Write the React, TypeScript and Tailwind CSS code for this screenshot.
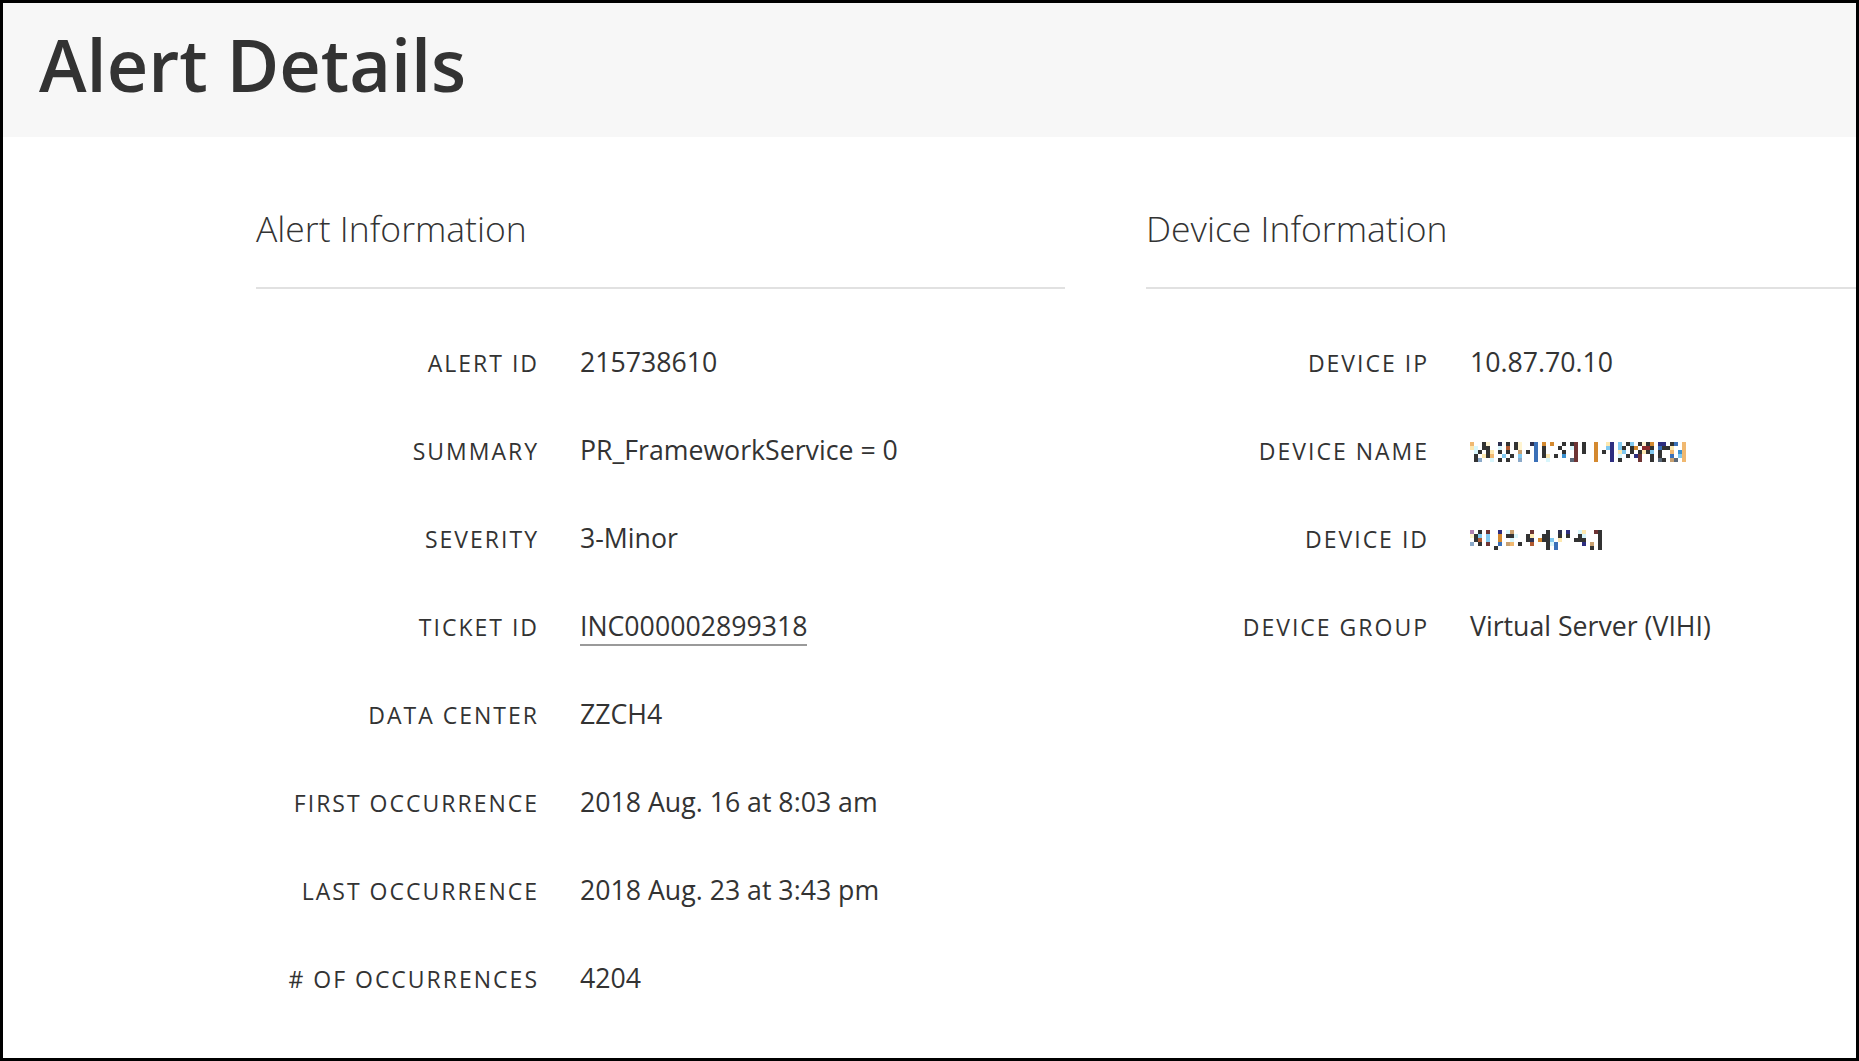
import React from "react";

type Row = { label: string; value: React.ReactNode };

// pixelated (redacted) values, 4px cells
const palette: Record<string, string> = {
  d: "#333333",
  n: "#2e2e80",
  N: "#2d3050",
  b: "#3a70b8",
  B: "#3a90d0",
  c: "#d8f6fc",
  l: "#80c8f0",
  o: "#d4892f",
  O: "#f0b870",
  y: "#fff4d0",
  Y: "#fde8b0",
  r: "#6e3434",
  R: "#8a2a2a",
  s: "#b05a30",
  g: "#8aa8c8",
  G: "#5a6878",
  t: "#c8a070",
  p: "#b080b0",
};

const deviceName = [
  "O..dy..N.d" + ".dy..Nb.o." + "o..d.dr.d." + ".o..Yn.l.d" + "l.dydo.nn." + "db.O",
  "Yc.dd..c.s" + ".dy...b.d." + "..d..cr.d." + ".o..ln.ld." + "do.RRd.bdd" + "Y..O",
  ".cd.dY.d.d" + "..t.d.b.d." + "...d..r.d." + ".o.d.n.Yl." + "d.dYdl.d.." + "O.BO",
  ".d.YdO..l." + "d.l...b.dY" + ".d.B..r..." + ".o...n.c.d" + ".nr..d.d.." + "b.lO",
  ".dg..c.d.d" + "..g...b..c" + ".....Gr..." + ".o...n.d.." + "..r..d.Gd." + "tG.O",
];

const deviceId = [
  "p.d.r..n.ct....r...d..N.n..cY..rd",
  "ydl.l..o.ddc..dY..dd..d.d..dc...d",
  ".ds.l..o..c...dN.oddl.Y...ddd...d",
  "g.d.r..b.tO.d..s...dcb......n.t.d",
  "......d............" + "d.b" + "........d." + "d",
];

function Mosaic({ rows }: { rows: string[] }) {
  const cols = rows[0].length;
  return (
    <svg
      width={cols * 4}
      height={rows.length * 4}
      viewBox={`0 0 ${cols * 4} ${rows.length * 4}`}
      className="inline-block align-[-2px]"
      shapeRendering="crispEdges"
    >
      {rows.map((row, y) =>
        row.split("").map((ch, x) =>
          palette[ch] ? (
            <rect key={`${x}-${y}`} x={x * 4} y={y * 4} width={4} height={4} fill={palette[ch]} />
          ) : null
        )
      )}
    </svg>
  );
}

const alertRows: Row[] = [
  { label: "Alert ID", value: "215738610" },
  { label: "Summary", value: "PR_FrameworkService = 0" },
  { label: "Severity", value: "3-Minor" },
  {
    label: "Ticket ID",
    value: <span className="border-b-2 border-[#9a9a9a]">INC000002899318</span>,
  },
  { label: "Data Center", value: "ZZCH4" },
  { label: "First Occurrence", value: "2018 Aug. 16 at 8:03 am" },
  { label: "Last Occurrence", value: "2018 Aug. 23 at 3:43 pm" },
  { label: "# of Occurrences", value: "4204" },
];

const deviceRows: Row[] = [
  { label: "Device IP", value: "10.87.70.10" },
  { label: "Device Name", value: <Mosaic rows={deviceName} /> },
  { label: "Device ID", value: <Mosaic rows={deviceId} /> },
  { label: "Device Group", value: "Virtual Server (VIHI)" },
];

function InfoSection({ title, rows }: { title: string; rows: Row[] }) {
  return (
    <section className="w-[809px] shrink-0">
      <h2 className="text-[35.5px] font-light leading-none pb-[40px] border-b-2 border-[#e1e1e1]">
        {title}
      </h2>
      <div className="mt-[29px]">
        {rows.map((row, i) => (
          <div key={i} className="flex items-baseline h-[88px] leading-[88px]">
            <span className="w-[283px] shrink-0 text-right text-[23px] uppercase tracking-[2px]">
              {row.label}
            </span>
            <span className="ml-[41px] text-[26.7px] whitespace-nowrap">{row.value}</span>
          </div>
        ))}
      </div>
    </section>
  );
}

export default function App() {
  return (
    <div className="h-screen w-full overflow-hidden border-[3px] border-black bg-white text-[#333] font-['Open_Sans',sans-serif]">
      {/* Header */}
      <header className="h-[134px] bg-[#f7f7f7] pl-[36px] pt-[25px]">
        <h1 className="text-[72px] font-semibold leading-none">Alert Details</h1>
      </header>

      {/* Info columns */}
      <div className="flex gap-[81px] pl-[253px] pt-[74px]">
        <InfoSection title="Alert Information" rows={alertRows} />
        <InfoSection title="Device Information" rows={deviceRows} />
      </div>
    </div>
  );
}
